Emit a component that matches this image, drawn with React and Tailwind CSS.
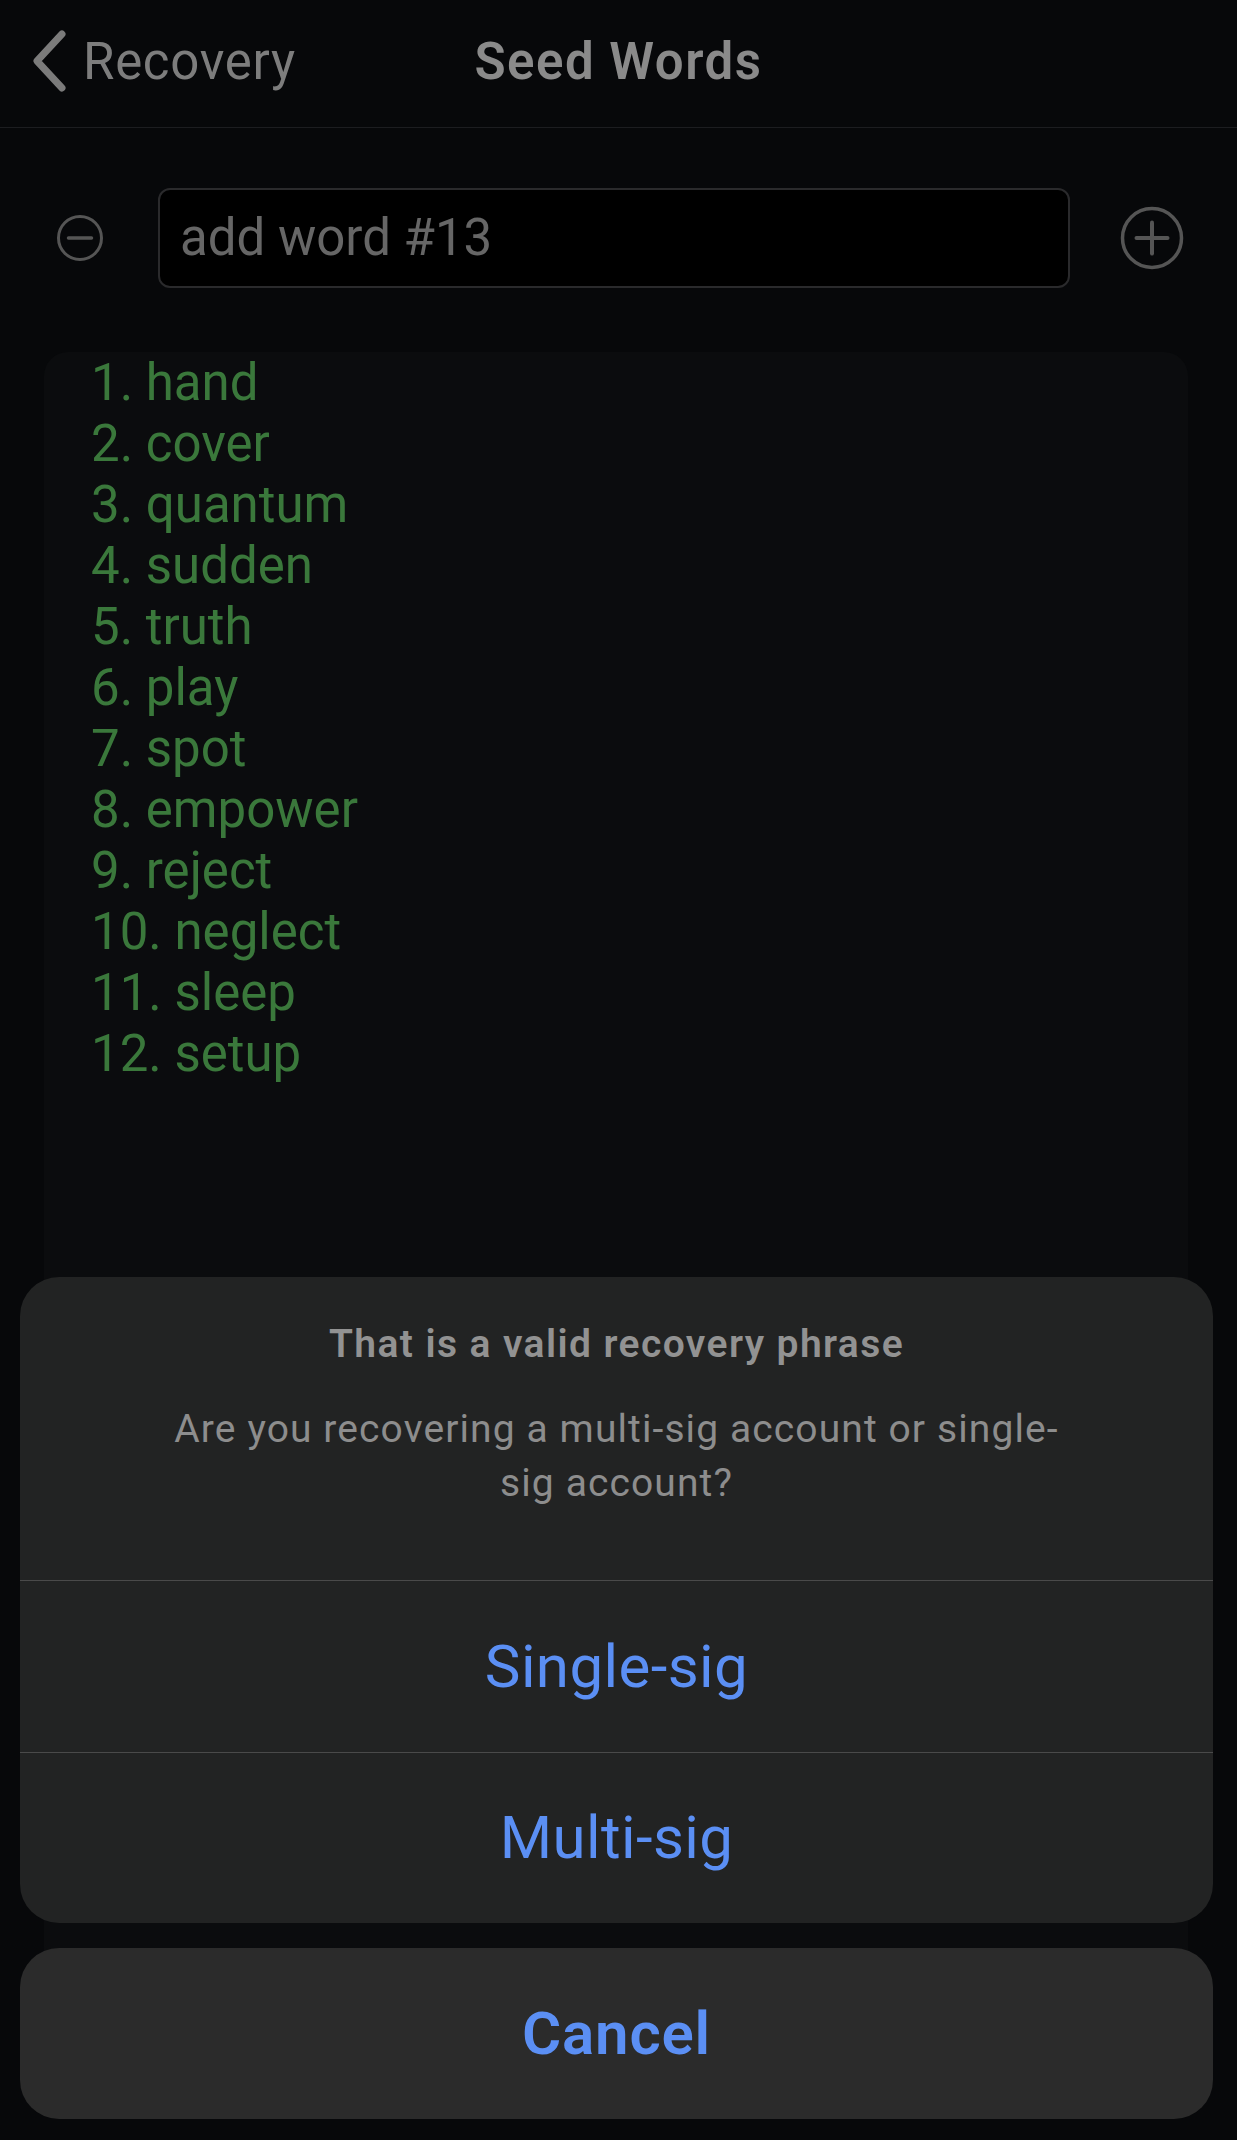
import React from 'react';

const words = ['hand', 'cover', 'quantum', 'sudden', 'truth', 'play', 'spot', 'empower', 'reject', 'neglect', 'sleep', 'setup'];

const ChevronLeft = () => (
  <svg width="40" height="64" viewBox="0 0 40 64" fill="none">
    <polyline points="33,5 8,32 33,59" stroke="#7b7b7b" strokeWidth="7" strokeLinecap="round" strokeLinejoin="round" />
  </svg>
);

const MinusCircle = () => (
  <svg width="48" height="48" viewBox="0 0 48 48" fill="none">
    <circle cx="24" cy="24" r="21.5" stroke="#555" strokeWidth="3" />
    <line x1="12.5" y1="24" x2="35.5" y2="24" stroke="#555" strokeWidth="3.5" strokeLinecap="round" />
  </svg>
);

const PlusCircle = () => (
  <svg width="64" height="64" viewBox="0 0 64 64" fill="none">
    <circle cx="32" cy="32" r="29.5" stroke="#555" strokeWidth="3.5" />
    <line x1="16.5" y1="32" x2="47.5" y2="32" stroke="#555" strokeWidth="4" strokeLinecap="round" />
    <line x1="32" y1="16.5" x2="32" y2="47.5" stroke="#555" strokeWidth="4" strokeLinecap="round" />
  </svg>
);

export default function App() {
  return (
    <div className="relative w-[1237px] h-[2140px] overflow-hidden bg-[#07080a] font-['Roboto','Noto_Sans',sans-serif]">
      {/* Nav bar */}
      <div className="h-[128px] border-b border-[#1c1d20]">
        <div className="grid h-[122px] grid-cols-[1fr_auto_1fr] items-center">
          <div className="flex items-center pl-[29px]">
            <ChevronLeft />
            <span className="ml-[14px] text-[51px] leading-none tracking-[0.7px] text-[#7d7d7d]">Recovery</span>
          </div>
          <div className="text-[51px] font-semibold leading-none tracking-[1.5px] text-[#8a8a8a]">Seed Words</div>
          <div />
        </div>
      </div>

      {/* Word input */}
      <div className="mt-[60px] flex h-[100px] items-center pl-[56px]">
        <MinusCircle />
        <div className="ml-[54px] flex h-[100px] w-[912px] items-center rounded-[12px] border-2 border-[#2a2a2c] bg-black pl-[20px]">
          <span className="text-[51px] text-[#666666]">add word #13</span>
        </div>
        <div className="ml-[50px]">
          <PlusCircle />
        </div>
      </div>

      {/* Word list */}
      <div className="ml-[44px] mt-[64px] h-[1738px] w-[1144px] rounded-[24px] bg-[#0b0c0e] pl-[47px]">
        {words.map((w, i) => (
          <div key={w} className="text-[51px] leading-[61px] text-[#3a783b]">
            {i + 1}. {w}
          </div>
        ))}
      </div>

      {/* Action sheet */}
      <div className="absolute bottom-[21px] left-[20px] right-[24px] flex flex-col gap-[25px]">
        <div className="overflow-hidden rounded-[39px] bg-[#222323]">
          <div className="h-[303px] px-[40px] pt-[43px] text-center">
            <div className="text-[39px] font-semibold leading-[48px] tracking-[1.4px] text-[#929292]">That is a valid recovery phrase</div>
            <div className="mt-[34px] text-[39px] leading-[54px] tracking-[1.1px] text-[#8d8d8d]">
              Are you recovering a multi-sig account or single-
              <br />
              sig account?
            </div>
          </div>
          <div className="flex h-[172px] items-center justify-center border-t border-[#4a4a4a] text-[60px] tracking-[0.4px] text-[#5b8ff4]">
            Single-sig
          </div>
          <div className="flex h-[171px] items-center justify-center border-t border-[#4a4a4a] text-[60px] tracking-[0.4px] text-[#5b8ff4]">
            Multi-sig
          </div>
        </div>
        <div className="flex h-[171px] items-center justify-center rounded-[39px] bg-[#2b2b2b] text-[60px] font-semibold tracking-[0.8px] text-[#5b8ff4]">
          Cancel
        </div>
      </div>
    </div>
  );
}
